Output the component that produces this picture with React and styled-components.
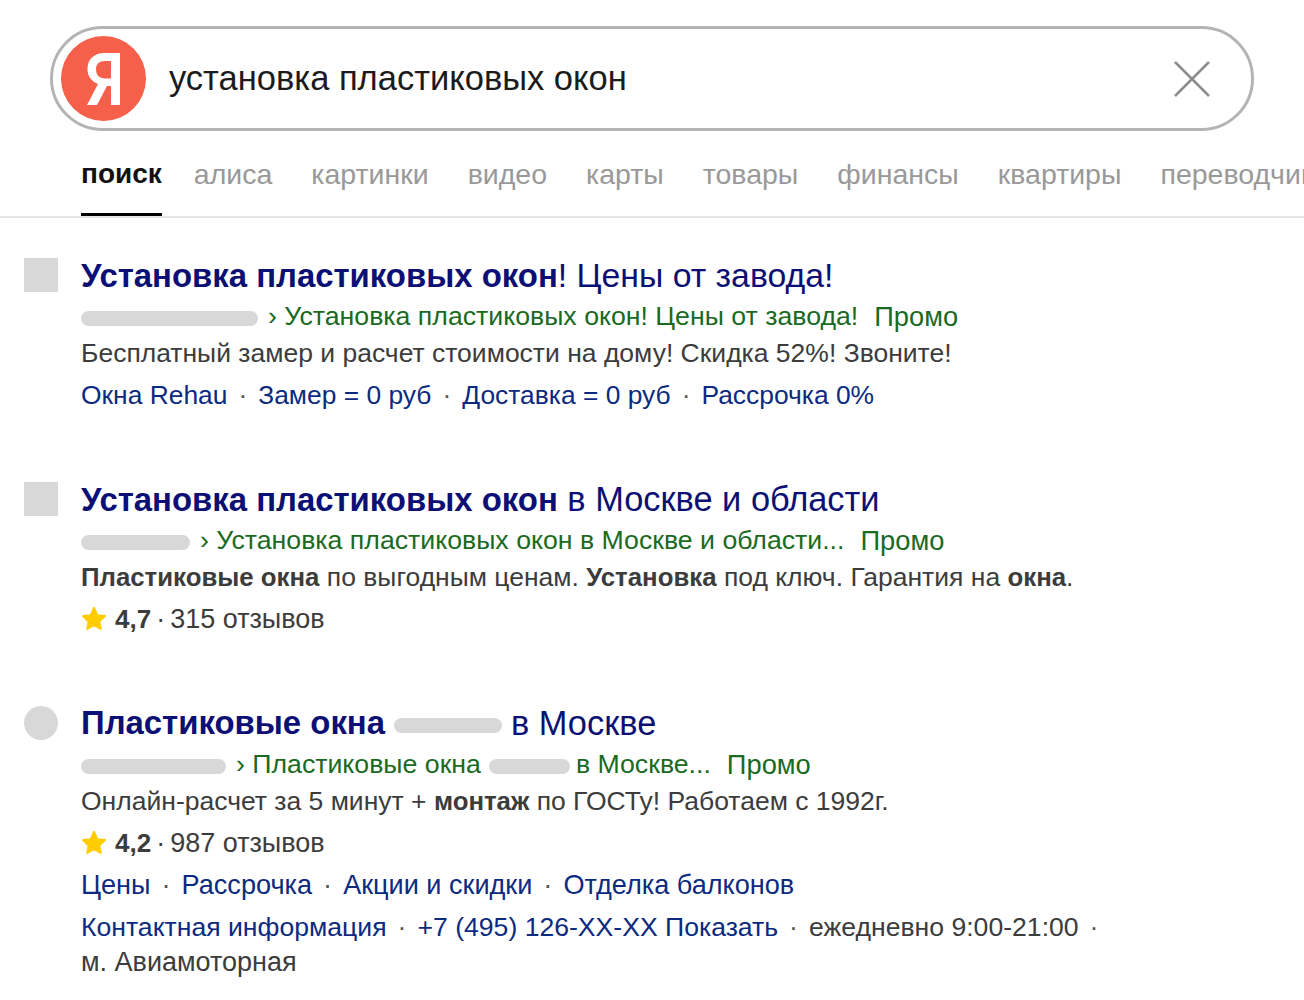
import React from 'react';
import styled, { createGlobalStyle } from 'styled-components';

const GlobalStyle = createGlobalStyle`
    html, body {
        margin: 0;
        padding: 0;
        background: #fff;
        overflow-x: hidden;
    }
    body {
        font-family: "Liberation Sans", Arial, sans-serif;
    }
`;

const Page = styled.div`
    width: 1304px;
    height: 1000px;
    overflow: hidden;
    background: #fff;
`;

const Header = styled.header`
    padding: 26px 50px 0;
`;

const SearchBar = styled.div`
    box-sizing: border-box;
    width: 1204px;
    height: 105px;
    display: flex;
    align-items: center;
    padding: 0 40px 0 8px;
    border: 3px solid #b4b4b4;
    border-radius: 53px;
`;

const Logo = styled.div`
    width: 85px;
    height: 85px;
    flex: none;
    border-radius: 50%;
    background: #f6604a;
    display: flex;
    align-items: center;
    justify-content: center;
`;

const Query = styled.div`
    flex: 1;
    margin-left: 23px;
    margin-top: -1px;
    font-size: 34.5px;
    color: #1b1b1b;
`;

const Tabs = styled.nav`
    display: flex;
    gap: 39px;
    height: 87px;
    box-sizing: border-box;
    padding: 0 0 0 81px;
    border-bottom: 2px solid #e6e6e6;
    overflow: hidden;
`;

const Tab = styled.div`
    flex: none;
    box-sizing: border-box;
    height: 85px;
    padding-top: 27px;
    margin-right: ${(p) => (p.$active ? '-7px' : '0')};
    font-size: ${(p) => (p.$active ? '28px' : '28.5px')};
    font-weight: ${(p) => (p.$active ? 700 : 400)};
    color: ${(p) => (p.$active ? '#111' : '#999')};
    border-bottom: 3px solid ${(p) => (p.$active ? '#000' : 'transparent')};
`;

const Results = styled.main`
    display: flex;
    flex-direction: column;
    gap: 28px;
    padding: 36px 0 0 24px;
`;

const Result = styled.article`
    display: grid;
    grid-template-columns: 34px 1fr;
    column-gap: 23px;
    height: 196px;
`;

const Favicon = styled.div`
    width: 34px;
    height: 34px;
    margin-top: 4px;
    background: #d8d8d8;
    border-radius: ${(p) => (p.$round ? '50%' : '0')};
`;

const Title = styled.h2`
    margin: 0;
    height: 42px;
    display: flex;
    align-items: center;
    gap: 9px;
    font-size: ${(p) => p.$size || 34.4}px;
    line-height: 42px;
    font-weight: 400;
    color: #0c0f74;

    b {
        font-size: 32.9px;
        font-weight: 700;
    }
`;

const UrlRow = styled.div`
    display: flex;
    align-items: center;
    height: 39px;
    padding-top: 2px;
    box-sizing: border-box;
    font-size: 26.7px;
    color: #1a6a1f;
`;

const Blur = styled.span`
    display: inline-block;
    flex: none;
    width: ${(p) => p.$w}px;
    height: 15px;
    margin: 4px ${(p) => p.$gap || 0}px 0 ${(p) => p.$gapLeft || 0}px;
    border-radius: 8px;
    background: #d8d8d8;
`;

const Promo = styled.span`
    margin-left: 16px;
    font-size: 27.3px;
`;

const Text = styled.div`
    height: 37px;
    font-size: 26.5px;
    line-height: 37px;
    color: #3c3c3c;

    b {
        font-size: 25.8px;
        font-weight: 700;
    }
`;

const Rating = styled.div`
    display: flex;
    align-items: center;
    height: 46px;
    font-size: 27px;
    color: #3c3c3c;

    b {
        margin-left: 8px;
        font-size: 26px;
        font-weight: 700;
    }
`;

const RatingDot = styled.span`
    margin: 0 5px;
`;

const Links = styled.div`
    box-sizing: border-box;
    height: ${(p) => p.$h || 46}px;
    padding-top: ${(p) => p.$top || 0}px;
    display: flex;
    align-items: center;
    font-size: ${(p) => p.$size || 26.4}px;
    color: #0c2a80;
`;

const Dot = styled.span`
    margin: 0 11px;
    color: #555;
`;

const Plain = styled.span`
    color: #3c3c3c;
`;

const Metro = styled.div`
    font-size: 27px;
    line-height: 37px;
    color: #3c3c3c;
`;

const Star = () => (
    <svg width="26" height="26" viewBox="0 0 26 26">
        <path
            d="M13 2l3.300 7.200 7.700.9-5.700 5.300 1.500 7.600L13 19.200 6.200 23l1.500-7.600L2 10.100l7.700-.9z"
            fill="#fc0"
            stroke="#fc0"
            strokeWidth="2"
            strokeLinejoin="round"
        />
    </svg>
);

const tabs = ['поиск', 'алиса', 'картинки', 'видео', 'карты', 'товары', 'финансы', 'квартиры', 'переводчик'];

const App = () => {
    return (
        <Page>
            <GlobalStyle />
            <Header>
                <SearchBar>
                    <Logo>
                        <svg width="33" height="52" viewBox="0 0 33 52">
                            <path
                                fillRule="evenodd"
                                d="M33 0v52h-9V33h-4L10 52H0l11-21C4 28 .5 23 .5 16 .5 6 7 0 18 0zM24 8h-6c-6 0-9 3-9 8 0 6 3 9.500 9 9.500h6z"
                                fill="#fff"
                            />
                        </svg>
                    </Logo>
                    <Query>установка пластиковых окон</Query>
                    <svg width="38" height="38" viewBox="0 0 38 38">
                        <path d="M2 2l34 34M36 2L2 36" stroke="#8c8c8c" strokeWidth="2.5" fill="none" />
                    </svg>
                </SearchBar>
            </Header>
            <Tabs>
                {tabs.map((t, i) => (
                    <Tab key={t} $active={i === 0}>{t}</Tab>
                ))}
            </Tabs>
            <Results>
                <Result>
                    <Favicon />
                    <div>
                        <Title $size={33.8}><span><b>Установка пластиковых окон</b>! Цены от завода!</span></Title>
                        <UrlRow>
                            <Blur $w={177} $gap={10} />
                            › Установка пластиковых окон! Цены от завода!
                            <Promo>Промо</Promo>
                        </UrlRow>
                        <Text>Бесплатный замер и расчет стоимости на дому! Скидка 52%! Звоните!</Text>
                        <Links>
                            Окна Rehau<Dot>·</Dot>Замер = 0 руб<Dot>·</Dot>Доставка = 0 руб<Dot>·</Dot>Рассрочка 0%
                        </Links>
                    </div>
                </Result>
                <Result>
                    <Favicon />
                    <div>
                        <Title><span><b>Установка пластиковых окон</b> в Москве и области</span></Title>
                        <UrlRow>
                            <Blur $w={109} $gap={10} />
                            › Установка пластиковых окон в Москве и области...
                            <Promo>Промо</Promo>
                        </UrlRow>
                        <Text><b>Пластиковые окна</b> по выгодным ценам. <b>Установка</b> под ключ. Гарантия на <b>окна</b>.</Text>
                        <Rating><Star /><b>4,7</b><RatingDot>·</RatingDot>315 отзывов</Rating>
                    </div>
                </Result>
                <Result>
                    <Favicon $round />
                    <div>
                        <Title>
                            <b>Пластиковые окна</b>
                            <Blur $w={108} />
                            <span>в Москве</span>
                        </Title>
                        <UrlRow>
                            <Blur $w={145} $gap={10} />
                            › Пластиковые окна
                            <Blur $w={81} $gapLeft={8} $gap={6} />
                            в Москве...
                            <Promo>Промо</Promo>
                        </UrlRow>
                        <Text>Онлайн-расчет за 5 минут + <b>монтаж</b> по ГОСТу! Работаем с 1992г.</Text>
                        <Rating><Star /><b>4,2</b><RatingDot>·</RatingDot>987 отзывов</Rating>
                        <Links $h={38} $size={27.1}>
                            Цены<Dot>·</Dot>Рассрочка<Dot>·</Dot>Акции и скидки<Dot>·</Dot>Отделка балконов
                        </Links>
                        <Links $h={40} $top={6} $size={26.6}>
                            Контактная информация<Dot>·</Dot>+7 (495) 126-ХХ-ХХ Показать<Dot>·</Dot><Plain>ежедневно 9:00-21:00</Plain><Dot>·</Dot>
                        </Links>
                        <Metro>м. Авиамоторная</Metro>
                    </div>
                </Result>
            </Results>
        </Page>
    );
};

export default App;
